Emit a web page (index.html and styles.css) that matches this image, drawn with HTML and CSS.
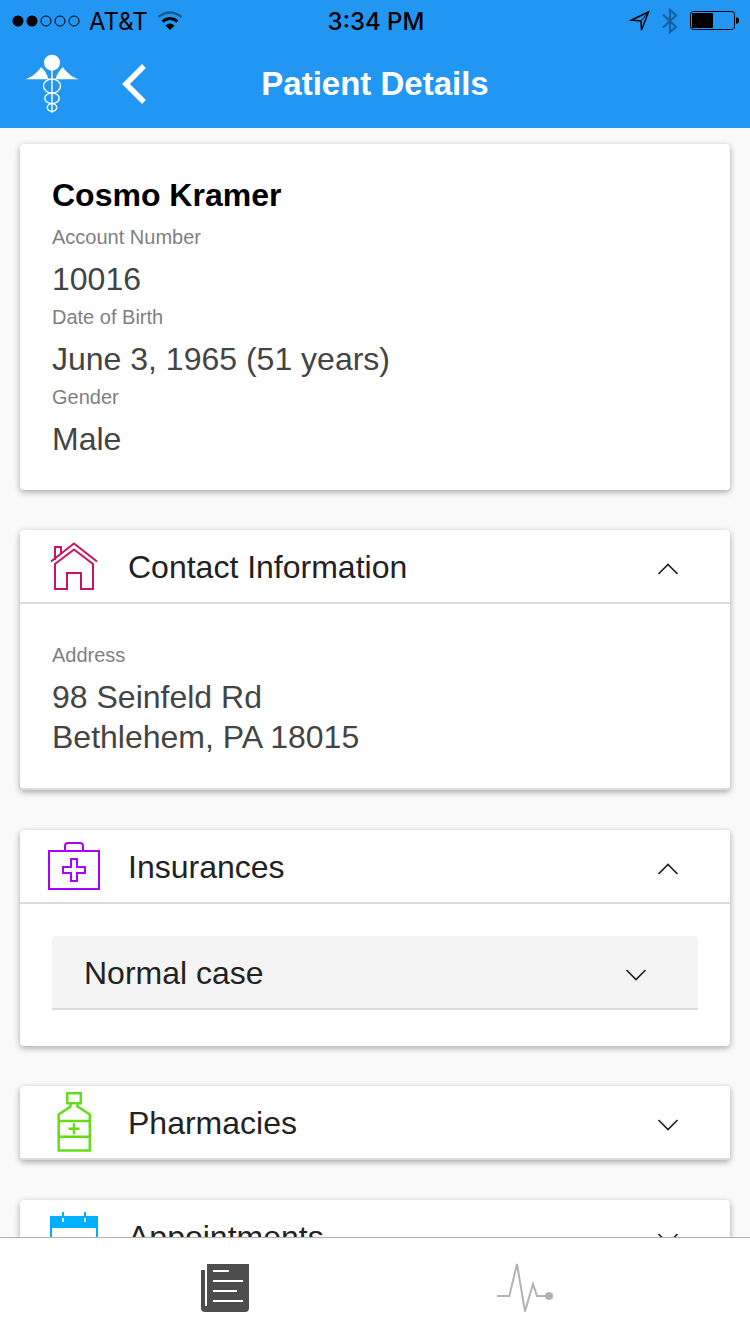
FILE: index.html
```html
<!DOCTYPE html>
<html lang="en">

<head>
    <meta charset="utf-8">
    <title>Patient Details</title>
    <meta name="viewport" content="width=device-width, initial-scale=1">
    <link rel="stylesheet" href="styles.css">
</head>

<body>
    <header class="header">
        <div class="status">
            <div class="status_left">
                <svg width="68" height="12" viewBox="0 0 68 12">
                    <circle cx="6" cy="6" r="5.5" />
                    <circle cx="20" cy="6" r="5.5" />
                    <g fill="none" stroke="#000">
                        <circle cx="34" cy="6" r="5" />
                        <circle cx="48" cy="6" r="5" />
                        <circle cx="62" cy="6" r="5" />
                    </g>
                </svg>
                <span>AT&amp;T</span>
                <svg width="26" height="20" viewBox="0 0 26 20" fill="none" stroke="#000" stroke-width="3">
                    <path d="M1.500 6Q13-3 24.500 6" stroke-width="2.600" opacity=".4" />
                    <path d="M5.500 10.500Q13 4.500 20.500 10.500" />
                    <path d="M13 19L8.500 14.500Q13 10.500 17.500 14.500Z" fill="#000" stroke="none" />
                </svg>
            </div>
            <span class="time">3:34 PM</span>
            <div class="status_right">
                <svg width="22" height="26" viewBox="0 0 22 26" fill="none" stroke="#000" stroke-width="1.500">
                    <path d="M20.500 4L3.500 12L13 13L13.500 22Z" />
                    <path d="M13 13L19 6" stroke-width="1" />
                </svg>
                <svg width="16" height="26" viewBox="0 0 16 26" fill="none" stroke="#1460a0" stroke-width="2.200">
                    <path d="M1 6.500L14 19L8 24V2L14 7.500L1 19.500" />
                </svg>
                <svg width="50" height="20" viewBox="0 0 50 20">
                    <rect x=".5" y=".5" width="44" height="18" rx="3" fill="none" stroke="#000" />
                    <rect x="2" y="2" width="21" height="15" rx="1" />
                    <path d="M46 6.500h1q2 0 2 3t-2 3h-1z" />
                </svg>
            </div>
        </div>
        <nav class="nav">
            <div class="nav_left">
                <svg width="64" height="88" viewBox="20 40 64 88" fill="#fff">
                    <circle cx="52" cy="62.700" r="8" />
                    <path d="M25 79.300C32 77.500 38 72 41 67C44 69.500 47 74 48.700 79.300Z" />
                    <path d="M79 79.300C72 77.500 66 72 63 67C60 69.500 57 74 55.300 79.300Z" />
                    <path d="M52 70V113" stroke="#fff" stroke-width="2" opacity=".7" />
                    <g fill="none" stroke="#fff" stroke-width="1.400">
                        <ellipse cx="52" cy="86" rx="8.500" ry="7" />
                        <ellipse cx="52" cy="98.300" rx="7.200" ry="5.300" />
                        <ellipse cx="52" cy="107.400" rx="4.700" ry="3.800" />
                    </g>
                </svg>
                <button class="btn_back" aria-label="Back">
                    <svg width="40" height="88" viewBox="114 40 40 88" fill="none" stroke="#fff" stroke-width="5.500">
                        <path d="M144 66L126 84L144 102" />
                    </svg>
                </button>
            </div>
            <h1>Patient Details</h1>
        </nav>
    </header>

    <main class="content">
        <section class="card">
            <div class="card_body">
                <h2>Cosmo Kramer</h2>
                <dl>
                    <dt>Account Number</dt>
                    <dd>10016</dd>
                    <dt>Date of Birth</dt>
                    <dd>June 3, 1965 (51 years)</dd>
                    <dt>Gender</dt>
                    <dd>Male</dd>
                </dl>
            </div>
        </section>

        <section class="card card_line">
            <button class="item" aria-expanded="true">
                <svg class="icon house" viewBox="0 0 60 72">
                    <path d="M7 31.500L30 13.500L53 31.500" />
                    <path d="M11 30V17H17V24" />
                    <path d="M11 59V34L30 19.500L49 34V59H37V43H23V59Z" />
                </svg>
                <span>Contact Information</span>
                <svg class="arrow" viewBox="0 0 24 72">
                    <path d="M2.500 44L12 34.500L21.500 44" />
                </svg>
            </button>
            <div class="card_body">
                <dl>
                    <dt>Address</dt>
                    <dd>98 Seinfeld Rd<br>Bethlehem, PA 18015</dd>
                </dl>
            </div>
        </section>

        <section class="card">
            <button class="item" aria-expanded="true">
                <svg class="icon bag" viewBox="0 0 60 72">
                    <rect x="5" y="21" width="50" height="38" />
                    <path d="M21 20V16Q21 13 24 13H36Q39 13 39 16V20" />
                    <path d="M27 29H33V37H41V43H33V51H27V43H19V37H27Z" />
                </svg>
                <span>Insurances</span>
                <svg class="arrow" viewBox="0 0 24 72">
                    <path d="M2.500 44L12 34.500L21.500 44" />
                </svg>
            </button>
            <div class="card_list">
                <button class="item sub_item" aria-expanded="false">
                    <span>Normal case</span>
                    <svg class="arrow" viewBox="0 0 24 72">
                        <path d="M2.500 34L12 43.500L21.500 34" />
                    </svg>
                </button>
            </div>
        </section>

        <section class="card">
            <button class="item" aria-expanded="false">
                <svg class="icon bottle" viewBox="0 0 60 72">
                    <rect x="23.200" y="7.200" width="13.600" height="10" />
                    <path d="M26.500 17V20.500L14.700 28.500V64.500H45.800V28.500L33.500 20.500V17" />
                    <path d="M14.700 35H45.800M14.700 50.700H45.800M24.500 42.800H35.500M30 37.300V48.300" />
                </svg>
                <span>Pharmacies</span>
                <svg class="arrow" viewBox="0 0 24 72">
                    <path d="M2.500 34L12 43.500L21.500 34" />
                </svg>
            </button>
        </section>

        <section class="card">
            <button class="item" aria-expanded="false">
                <svg class="icon calendar" viewBox="0 0 60 72">
                    <rect x="7" y="17" width="46" height="42" />
                    <path d="M6 22H54" stroke-width="12" />
                    <path d="M19 12V17M41 12V17" />
                    <path d="M19 18V22M41 18V22" stroke="#fff" />
                </svg>
                <span>Appointments</span>
                <svg class="arrow" viewBox="0 0 24 72">
                    <path d="M2.500 34L12 43.500L21.500 34" />
                </svg>
            </button>
        </section>
    </main>

    <footer class="tabs">
        <button aria-label="Details">
            <svg width="48" height="48" viewBox="0 0 48 48" fill="#4d4d4d">
                <path d="M6 0H48V44Q48 48 44 48H4Q0 48 0 44V6H4V42H6Z" />
                <path d="M12 7H28M12 17H42M12 27H36M12 37H42" stroke="#fff" stroke-width="2" />
            </svg>
        </button>
        <button aria-label="Vitals">
            <svg width="56" height="52" viewBox="0 0 56 52" fill="none" stroke="#b3b3b3" stroke-width="2">
                <path d="M0 34H12.300L20 2L28 49.500L36 22L40 34H50" />
                <circle cx="52" cy="34" r="4" fill="#b3b3b3" stroke="none" />
            </svg>
        </button>
    </footer>
</body>

</html>
```
FILE: styles.css
```css
* {
    margin: 0;
    padding: 0;
    box-sizing: border-box;
}

body {
    display: flex;
    flex-direction: column;
    height: 100vh;
    background-color: #fafafa;
    font-family: "Liberation Sans", Arial, sans-serif;
    font-size: 32px;
}

button {
    border: none;
    background: none;
    font: inherit;
    color: inherit;
    cursor: pointer;
}

svg {
    display: block;
    flex: none;
}

/* header */
.header {
    flex: none;
    background-color: #2196f3;
}

.status {
    display: grid;
    grid-template-columns: 1fr auto 1fr;
    align-items: center;
    height: 40px;
    padding: 2px 10px 0 12px;
    font-family: Inter, sans-serif;
    font-size: 24px;
}

.status_left,
.status_right {
    display: flex;
    align-items: center;
    gap: 12px;
}

.status_left {
    gap: 9px;
}

.status_right {
    justify-content: flex-end;
}

.time {
    font-weight: 500;
}

.nav {
    display: grid;
    grid-template-columns: 1fr auto 1fr;
    align-items: center;
    height: 88px;
    padding: 0 20px;
}

.nav_left {
    display: flex;
    gap: 30px;
}

.nav h1 {
    color: white;
    font-size: 33px;
}

/* cards */
.content {
    flex: 1;
    min-height: 0;
    overflow: hidden;
    display: flex;
    flex-direction: column;
    gap: 40px;
    padding: 16px 20px;
}

.card {
    flex: none;
    background-color: white;
    border-radius: 4px;
    box-shadow: 0 2px 6px rgba(0, 0, 0, 0.35);
}

.card_line {
    border-bottom: 2px solid #dcdcdc;
}

.card_body {
    padding: 34px 32px 30px;
}

.card_list {
    padding: 32px 32px 36px;
}

h2 {
    margin-bottom: 8px;
    font-size: 32px;
    line-height: 34px;
}

dt {
    padding: 5px 0 10px;
    font-size: 20px;
    line-height: 24px;
    color: #808080;
}

dd {
    padding-bottom: 1px;
    line-height: 40px;
    color: #444;
}

.item {
    display: flex;
    align-items: center;
    gap: 24px;
    width: 100%;
    height: 74px;
    padding: 0 50px 0 24px;
    border-bottom: 2px solid #dcdcdc;
    text-align: left;
    color: #222;
}

.item span {
    flex: 1;
    padding-top: 2px;
}

.sub_item {
    padding-left: 32px;
    border-radius: 4px 4px 0 0;
    background-color: #f4f4f4;
}

.icon {
    width: 60px;
    height: 72px;
    fill: none;
    stroke-width: 2;
}

.arrow {
    width: 24px;
    height: 72px;
    fill: none;
    stroke: #222;
    stroke-width: 1.7;
}

.house {
    stroke: #c9145f;
}

.bag {
    stroke: #aa00ff;
}

.bottle {
    stroke: #64dd17;
    stroke-width: 2.5;
}

.calendar {
    stroke: #00b0ff;
}

/* bottom tabs */
.tabs {
    flex: none;
    display: flex;
    height: 97px;
    padding: 4px 10% 0;
    background-color: white;
    border-top: 1px solid #b2b2b2;
}

.tabs button {
    flex: 1;
    display: flex;
    align-items: center;
    justify-content: center;
}
```
